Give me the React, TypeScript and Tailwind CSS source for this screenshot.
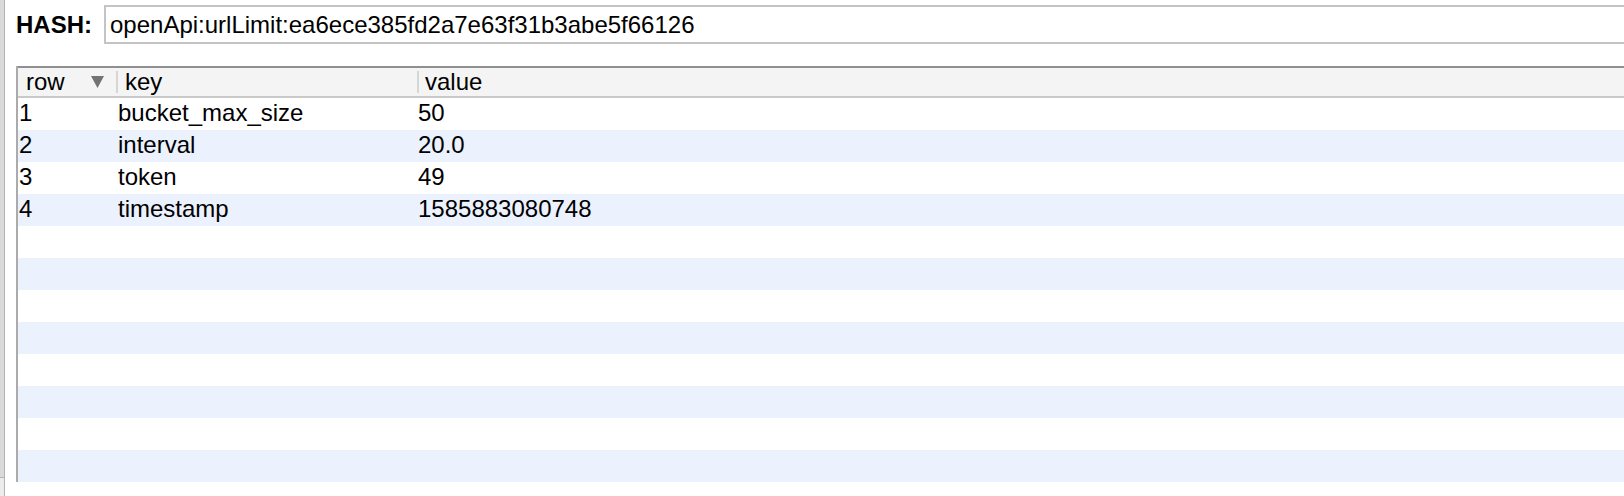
import React from "react";

const rows: [string, string, string][] = [
  ["1", "bucket_max_size", "50"],
  ["2", "interval", "20.0"],
  ["3", "token", "49"],
  ["4", "timestamp", "1585883080748"],
];

export default function App() {
  const all = Array.from({ length: 12 }, (_, i) => rows[i] ?? ["", "", ""]);
  return (
    <div className="w-[1624px] h-[496px] flex bg-white overflow-hidden font-['Liberation_Sans',Arial,sans-serif] text-black">
      <div className="w-[5px] flex flex-col border-r border-[#b3b3b3]">
        <div className="flex-1 bg-[#dadada]" />
        <div className="h-[19px] bg-[#ececec] border-t border-[#b3b3b3]" />
      </div>
      <div className="flex-1 flex flex-col min-w-0">
        <div className="h-[66px] flex pt-[5px] pl-[11px]">
          <div className="h-[39px] flex items-center text-[24px] font-bold w-[88px] shrink-0">HASH:</div>
          <div className="h-[39px] flex-1 -mr-[4px] border-2 border-[#c4c4c4] bg-white flex items-center pl-[4px] text-[24px] whitespace-nowrap">
            openApi:urlLimit:ea6ece385fd2a7e63f31b3abe5f66126
          </div>
        </div>
        <div className="ml-[11px] border-l-2 border-[#ababab] flex flex-col">
          <div className="h-[32px] border-t-2 border-[#8f8f8f] border-b-2 border-b-[#c9c9c9] bg-[#f4f4f4] flex text-[24px] leading-[28px]">
            <div className="w-[98px] shrink-0 flex items-center pl-[8px] relative">
              <span>row</span>
              <svg className="absolute left-[73px] top-[8px]" width="13" height="12" viewBox="0 0 13 12">
                <polygon points="0,0 13,0 6.5,12" fill="#737373" />
              </svg>
            </div>
            <div className="w-[301px] shrink-0 flex items-center">
              <div className="w-[2px] h-[22px] bg-[#d6d6d6] mr-[7px]" />
              <span>key</span>
            </div>
            <div className="flex-1 flex items-center">
              <div className="w-[2px] h-[22px] bg-[#d6d6d6] mr-[6px]" />
              <span>value</span>
            </div>
          </div>
          {all.map((r, i) => (
            <div
              key={i}
              className={`h-[32px] flex text-[24px] leading-[30px] ${i % 2 === 1 ? "bg-[#ebf1fd]" : "bg-white"}`}
            >
              <div className="w-[98px] shrink-0 pl-[1px]">{r[0]}</div>
              <div className="w-[301px] shrink-0 pl-[2px]">{r[1]}</div>
              <div className="flex-1 pl-[1px]">{r[2]}</div>
            </div>
          ))}
        </div>
      </div>
    </div>
  );
}
